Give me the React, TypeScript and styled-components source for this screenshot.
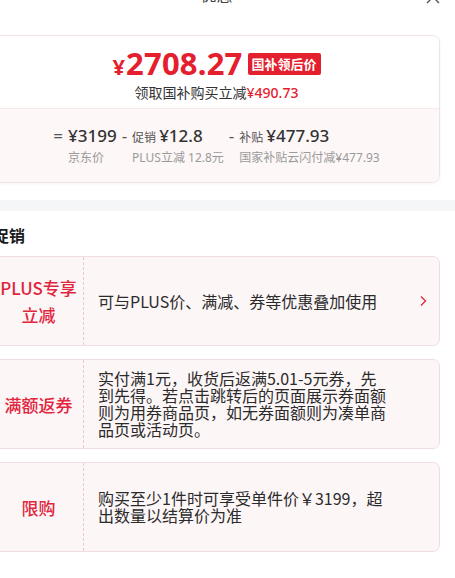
import styled, { createGlobalStyle } from 'styled-components'

const GlobalStyle = createGlobalStyle`
  html, body {
    margin: 0;
    padding: 0;
    background: #ffffff;
    overflow: hidden;
  }
  body {
    font-family: "Noto Sans", "Noto Sans CJK SC", sans-serif;
    color: #333333;
  }
`

const Red = '#e4202e'
const LabelRed = '#e1253d'

const Sheet = styled.div`
  width: 477px;
  box-sizing: border-box;
  margin-left: -22px;
  padding: 0 15px;
`

const Header = styled.div`
  position: relative;
  height: 26px;
  margin-top: -18px;
  margin-bottom: 27px;
  display: flex;
  align-items: center;
  justify-content: center;
`

const HeaderTitle = styled.div`
  font-size: 16px;
  line-height: 26px;
  color: #444;
`

const Close = styled.div`
  position: absolute;
  right: 0;
  top: 5px;
  width: 14px;
  height: 14px;
`

const PriceCard = styled.div`
  border: 1px solid #efe4e5;
  border-radius: 8px;
  overflow: hidden;
  box-shadow: 0 1px 3px rgba(200, 180, 180, 0.15);
`

const PriceTop = styled.div`
  padding: 10px 0 5px;
  display: flex;
  flex-direction: column;
  align-items: center;
  background: #ffffff;
`

const PriceLine = styled.div`
  display: flex;
  align-items: center;
  height: 36px;
`

const PriceMain = styled.div`
  display: flex;
  align-items: baseline;
  color: ${Red};
  font-weight: 700;
  line-height: 32px;
`

const Yen = styled.span<{ size: number }>`
  font-size: ${({ size }) => size}px;
  margin-right: 1px;
`

const Digits = styled.span`
  font-size: 31px;
  letter-spacing: 0.2px;
`

const Badge = styled.span`
  margin-left: 5px;
  background: ${Red};
  color: #fff;
  font-size: 13px;
  font-weight: 700;
  line-height: 22px;
  padding: 0 4px;
  border-radius: 2px;
  font-family: "Noto Sans CJK SC", sans-serif;
`

const SubLine = styled.div`
  font-size: 14px;
  line-height: 20px;
  color: #333;
  font-family: "Noto Sans CJK SC", sans-serif;
`

const SubAmount = styled.span`
  color: ${Red};
  font-family: "Noto Sans", sans-serif;
  font-weight: 500;
`

const PriceBottom = styled.div`
  background: #fdf7f7;
  border-top: 1px solid #f5eaea;
  padding: 15px 0 16px;
  display: flex;
  justify-content: center;
  gap: 5px;
`

const Formula = styled.div`
  display: grid;
  grid-template-columns: auto auto;
  grid-template-rows: 22px 18px;
  row-gap: 2px;
  align-items: center;
`

const Operator = styled.span`
  font-size: 17px;
  color: #555;
  margin-right: 5px;
`

const Value = styled.span`
  font-size: 17px;
  font-weight: 500;
  color: #333;
  white-space: nowrap;
`

const ValueTag = styled.span`
  font-size: 12px;
  font-weight: 400;
  color: #555;
  margin-right: 3px;
  font-family: "Noto Sans CJK SC", sans-serif;
`

const FormulaLabel = styled.span`
  grid-column: 2;
  font-size: 12px;
  color: #9a9a9a;
  white-space: nowrap;
`

const Divider = styled.div`
  height: 11px;
  margin: 17px -15px 0;
  background: #f5f6f8;
`

const SectionTitle = styled.div`
  padding-top: 13px;
  font-size: 16px;
  line-height: 22px;
  font-weight: 700;
  color: #1a1a1a;
  margin-bottom: 10px;
  font-family: "Noto Sans CJK SC", sans-serif;
`

const PromoList = styled.div`
  display: flex;
  flex-direction: column;
  gap: 13px;
`

const PromoCard = styled.div`
  display: flex;
  height: 88px;
  border: 1px solid #f1dde1;
  border-radius: 7px;
  background: #fdf6f7;
`

const PromoLabel = styled.div`
  width: 89px;
  flex-shrink: 0;
  border-right: 1px dashed #e6ccd2;
  display: flex;
  align-items: center;
  justify-content: center;
  text-align: center;
  font-size: 17px;
  line-height: 27px;
  font-weight: 500;
  color: ${LabelRed};
  font-family: "Noto Sans CJK SC", sans-serif;
`

const PromoBody = styled.div`
  flex: 1;
  display: flex;
  align-items: center;
  padding-left: 14px;
`

const PromoText = styled.div`
  width: 292px;
  font-size: 16px;
  line-height: 17px;
  color: #2b2b2b;
  font-family: "Noto Sans CJK SC", sans-serif;
`

const Arrow = styled.div`
  margin-left: auto;
  margin-right: 12px;
  width: 8px;
  height: 12px;
  display: flex;
`

const promos = [
  { label: ['PLUS专享', '立减'], text: '可与PLUS价、满减、券等优惠叠加使用', arrow: true },
  {
    label: ['满额返券'],
    text: '实付满1元，收货后返满5.01-5元券，先到先得。若点击跳转后的页面展示券面额则为用券商品页，如无券面额则为凑单商品页或活动页。',
    arrow: false,
  },
  { label: ['限购'], text: '购买至少1件时可享受单件价￥3199，超出数量以结算价为准', arrow: false },
]

export default function App() {
  return (
    <>
      <GlobalStyle />
      <Sheet>
        <Header>
          <HeaderTitle>优惠</HeaderTitle>
          <Close>
            <svg width="14" height="14" viewBox="0 0 14 14">
              <path d="M1 1L13 13M13 1L1 13" stroke="#555" strokeWidth="1.4" />
            </svg>
          </Close>
        </Header>

        <PriceCard>
          <PriceTop>
            <PriceLine>
              <PriceMain>
                <Yen size={22}>¥</Yen>
                <Digits>2708.27</Digits>
              </PriceMain>
              <Badge>国补领后价</Badge>
            </PriceLine>
            <SubLine>
              领取国补购买立减<SubAmount>¥490.73</SubAmount>
            </SubLine>
          </PriceTop>
          <PriceBottom>
            <Formula>
              <Operator>=</Operator>
              <Value>¥3199</Value>
              <FormulaLabel>京东价</FormulaLabel>
            </Formula>
            <Formula>
              <Operator>-</Operator>
              <Value>
                <ValueTag>促销</ValueTag>¥12.8
              </Value>
              <FormulaLabel>PLUS立减 12.8元</FormulaLabel>
            </Formula>
            <Formula>
              <Operator>-</Operator>
              <Value>
                <ValueTag>补贴</ValueTag>¥477.93
              </Value>
              <FormulaLabel>国家补贴云闪付减¥477.93</FormulaLabel>
            </Formula>
          </PriceBottom>
        </PriceCard>

        <Divider />

        <SectionTitle>促销</SectionTitle>
        <PromoList>
          {promos.map((p) => (
            <PromoCard key={p.label.join('')}>
              <PromoLabel>
                <div>
                  {p.label.map((l) => (
                    <div key={l}>{l}</div>
                  ))}
                </div>
              </PromoLabel>
              <PromoBody>
                <PromoText>{p.text}</PromoText>
                {p.arrow && (
                  <Arrow>
                    <svg width="8" height="12" viewBox="0 0 8 12">
                      <path d="M2 1.5L6.5 6L2 10.5" fill="none" stroke={LabelRed} strokeWidth="1.3" />
                    </svg>
                  </Arrow>
                )}
              </PromoBody>
            </PromoCard>
          ))}
        </PromoList>
      </Sheet>
    </>
  )
}
